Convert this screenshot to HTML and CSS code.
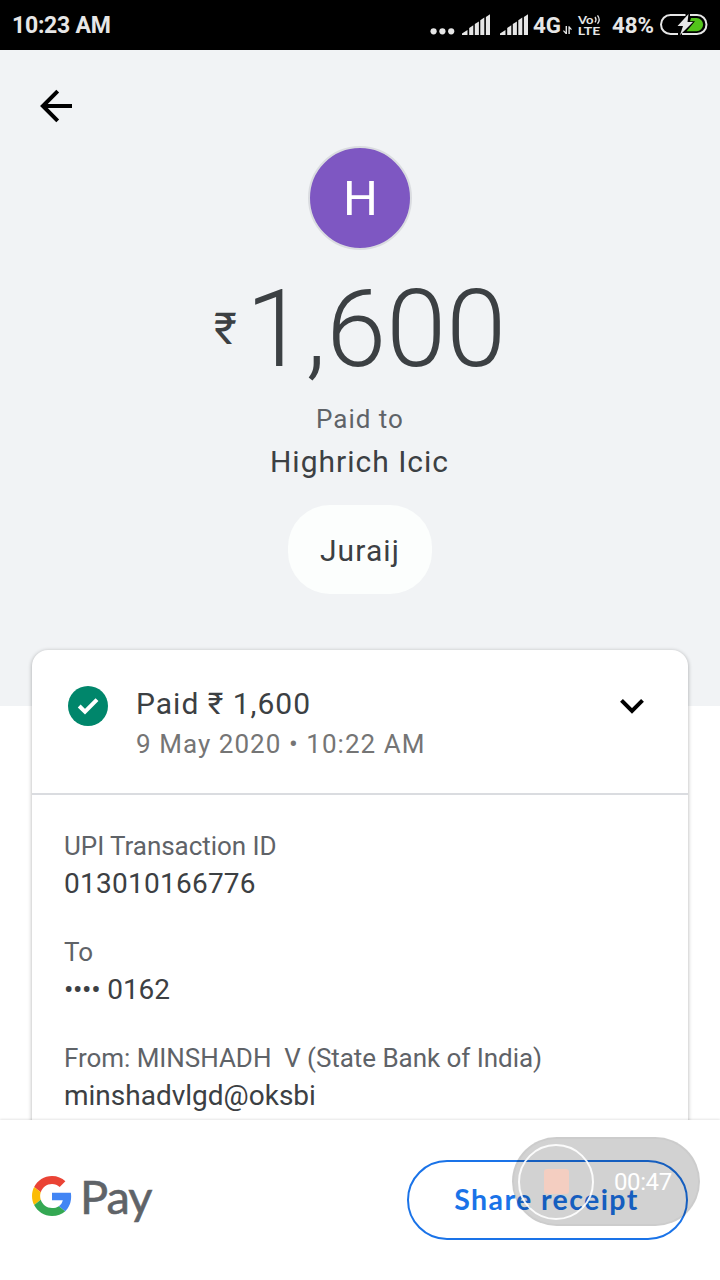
FILE: index.html
```html
<!DOCTYPE html>
<html lang="en">
<head>
<meta charset="utf-8">
<title>Payment receipt</title>
<link rel="stylesheet" href="styles.css">
</head>
<body>
<div class="screen">
  <header class="status">
    <span class="clock">10:23 AM</span>
    <svg class="status-icons" width="300" height="50" viewBox="420 0 300 50">
      <g fill="#e6e6e6">
        <circle cx="433.600" cy="31.300" r="3.100"/><circle cx="442.400" cy="31.300" r="3.100"/><circle cx="451.200" cy="31.300" r="3.100"/>
        <g id="signal">
          <path d="M462 35v-1.500l5.500-3.500v5zM469.200 35v-7l4.100-2.800v9.800zM474.800 35v-11l4.100-2.600v13.600zM480.300 35v-14.700l4-2.800v17.500zM485.900 35v-18l4.100-2.700v20.700z"/>
        </g>
        <use href="#signal" x="38"/>
        <path d="M567 34h-1.300l-2.700-3 .8-.8 1.800 1.800V26H567zM568.400 26.300h1l2.500 2.900-.8.800-1.300-1.300V34h-1.400z"/>
        <text class="net" x="533" y="33.300" textLength="28" lengthAdjust="spacingAndGlyphs">4G</text>
        <text class="volte" x="578" y="23.600" textLength="15.500" lengthAdjust="spacingAndGlyphs">Vo</text>
        <text class="volte" x="577.800" y="35" textLength="22.500" lengthAdjust="spacingAndGlyphs">LTE</text>
        <text class="pct" x="612" y="33.300" textLength="42" lengthAdjust="spacingAndGlyphs">48%</text>
      </g>
      <g fill="none" stroke="#e6e6e6" stroke-width="1.300">
        <path d="M595 17q2 2.700 0 5.400M597.500 15.300q3.400 4.500 0 8.400"/>
      </g>
      <g fill="none" stroke="#e6e6e6" stroke-width="2">
        <path d="M685.500 15H670.500a9.500 9.500 0 0 0 0 19H678M690 15h7a9.500 9.500 0 0 1 0 19H682"/>
      </g>
      <path d="M691 18h5.500a6.600 6.600 0 0 1 0 13.200H686.500l8.500-10h-5z" fill="#52c41a"/>
      <path d="M688.500 14l-11 12h5.500l-3 9 13-13h-5.500z" fill="#e6e6e6"/>
    </svg>
  </header>

  <main class="content">
    <section class="hero">
      <svg class="back" width="34" height="34" viewBox="39 89 34 34" fill="none" stroke="#000" stroke-width="4">
        <path d="M72 106H43M57.700 91.200L42.900 106l14.800 14.800"/>
      </svg>
      <div class="avatar">H</div>
      <div class="amount"><span class="rupee">₹</span><span class="figure">1,600</span></div>
      <div class="paid-to">Paid to</div>
      <div class="payee">Highrich Icic</div>
      <div class="note">Juraij</div>
    </section>

    <section class="card">
      <div class="summary">
        <svg class="tick" width="40" height="40" viewBox="68 686 40 40">
          <circle cx="88" cy="706" r="20" fill="#00866b"/>
          <path d="M79.200 706l5.800 5.700L97 699.700" fill="none" stroke="#fff" stroke-width="4"/>
        </svg>
        <div class="summary-text">
          <div class="paid">Paid ₹ 1,600</div>
          <div class="date">9 May 2020 • 10:22 AM</div>
        </div>
        <svg class="chevron" width="26" height="16" viewBox="619 698 26 16" fill="none" stroke="#000" stroke-width="4">
          <path d="M621.500 700.300L632 710.800l10.500-10.500"/>
        </svg>
      </div>
      <dl class="details">
        <div class="row"><dt>UPI Transaction ID</dt><dd class="txn">013010166776</dd></div>
        <div class="row"><dt>To</dt><dd class="acct"><span class="mask">••••</span> 0162</dd></div>
        <div class="row"><dt>From: MINSHADH&nbsp; V (State Bank of India)</dt><dd>minshadvlgd@oksbi</dd></div>
      </dl>
    </section>
  </main>

  <footer class="footer">
    <div class="brand">
      <svg width="40" height="40" viewBox="0 0 48 48">
        <path fill="#EA4335" d="M24 9.500c3.540 0 6.710 1.220 9.210 3.600l6.850-6.850C35.900 2.380 30.470 0 24 0 14.620 0 6.510 5.380 2.560 13.220l7.980 6.190C12.430 13.720 17.740 9.500 24 9.500z"/>
        <path fill="#4285F4" d="M46.980 24.550c0-1.570-.15-3.090-.38-4.550H24v9.020h12.940c-.58 2.960-2.260 5.480-4.780 7.180l7.730 6c4.510-4.180 7.090-10.360 7.090-17.650z"/>
        <path fill="#FBBC05" d="M10.530 28.590c-.48-1.450-.76-2.990-.76-4.590s.27-3.140.76-4.590l-7.980-6.190C.92 16.460 0 20.120 0 24c0 3.880.92 7.540 2.560 10.780l7.970-6.190z"/>
        <path fill="#34A853" d="M24 48c6.480 0 11.930-2.130 15.890-5.810l-7.730-6c-2.150 1.450-4.920 2.300-8.160 2.300-6.260 0-11.570-4.220-13.470-9.910l-7.980 6.190C6.510 42.620 14.620 48 24 48z"/>
      </svg>
      <span class="pay">Pay</span>
    </div>
    <button class="share">Share receipt</button>
    <div class="recorder">
      <span class="stop"><span class="stop-square"></span></span>
      <span class="elapsed">00:47</span>
    </div>
  </footer>
</div>
</body>
</html>
```
FILE: styles.css
```css
* { box-sizing: border-box; }
body { margin: 0; font-family: Roboto, "Noto Sans", sans-serif; color: #3c4043; background: #fff; }
.screen { width: 720px; height: 1280px; display: flex; flex-direction: column; overflow: hidden; }

.status { height: 50px; flex: none; display: flex; justify-content: space-between; background: #000; color: #e6e6e6; }
.clock { padding-left: 12px; font-size: 23px; font-weight: 700; line-height: 52px; letter-spacing: -.25px; }
.status-icons { display: block; }
.net, .pct { font-family: Roboto, sans-serif; font-size: 22.500px; font-weight: 700; }
.volte { font-family: Lato, sans-serif; font-size: 11.800px; font-weight: 700; }

.content { height: 1070px; flex: none; overflow: hidden; }
.hero { height: 656px; background: #f1f3f5; display: flex; flex-direction: column; align-items: center; padding-top: 39px; }
.back { display: block; align-self: flex-start; margin-left: 39px; flex: none; }
.avatar { width: 104px; height: 104px; margin-top: 23px; flex: none; border: 2px solid #dadce0; border-radius: 50%; background: #7e57c2; color: #fff; font-size: 49px; line-height: 102px; text-align: center; padding-left: 1px; }
.amount { display: flex; align-items: flex-start; height: 120px; margin-top: 19px; }
.rupee { font-size: 44px; line-height: 120px; margin-right: 9px; }
.figure { font-size: 108px; font-weight: 300; line-height: 120px; }
.paid-to { margin-top: 13px; font-size: 26px; line-height: 34px; letter-spacing: 1px; color: #5f6368; }
.payee { margin-top: 6px; padding-right: 1px; font-size: 30px; line-height: 40px; letter-spacing: 1px; }
.note { width: 144px; height: 89px; margin-top: 23px; border-radius: 42px; background: #fcfefd; font-size: 30px; line-height: 91px; letter-spacing: 1.100px; text-align: center; }

.card { width: 656px; height: 560px; margin: -56px auto 0; position: relative; background: #fff; border-radius: 16px 16px 0 0; box-shadow: 0 1px 4px rgba(0,0,0,.32); }
.summary { height: 145px; border-bottom: 2px solid #dadce0; display: flex; align-items: flex-start; padding: 36px 43px 0 36px; }
.summary-text { margin-left: 28px; flex: 1; }
.paid { font-size: 30px; line-height: 36px; letter-spacing: 1px; }
.date { font-size: 26px; line-height: 34px; margin-top: 5px; letter-spacing: 1.050px; color: #757575; }
.chevron { margin-top: 12px; }
.details { margin: 0; padding: 34px 32px; display: flex; flex-direction: column; gap: 32px; }
.row { height: 74px; }
dt { font-size: 26px; line-height: 34px; letter-spacing: -.05px; color: #5f6368; white-space: nowrap; }
dd { margin: 2px 0 0; font-size: 28px; line-height: 38px; }
.txn { letter-spacing: .25px; }
.mask { letter-spacing: -.4px; }

.footer { height: 160px; flex: none; position: relative; display: flex; justify-content: space-between; padding: 40px 32px 0; background: #fff; box-shadow: 0 -1px 2px rgba(0,0,0,.1); }
.brand { display: flex; align-items: flex-start; padding-top: 16px; }
.pay { font-family: Lato, sans-serif; font-size: 47px; line-height: 40px; margin-left: 8px; letter-spacing: -1px; color: #5f6368; -webkit-text-stroke: .6px #5f6368; }
.share { width: 281px; height: 80px; padding: 0 2px 3px 0; border: 2px solid #1a73e8; border-radius: 40px; background: #fff; color: #1a73e8; font-family: Lato, sans-serif; font-size: 28.500px; font-weight: 700; letter-spacing: 1.400px; }
.recorder { position: absolute; left: 512px; top: 17px; width: 188px; height: 89px; border-radius: 45px; background: rgba(0,0,0,.175); border: 2px solid rgba(0,0,0,.03); display: flex; align-items: center; padding-left: 4px; }
.stop { width: 76px; height: 76px; border: 2px solid rgba(255,255,255,.9); border-radius: 50%; display: flex; align-items: center; justify-content: center; }
.stop-square { width: 25px; height: 25px; border-radius: 3px; background: rgba(245,206,192,.95); }
.elapsed { margin-left: 20px; padding-top: 1px; color: #fff; font-size: 24px; letter-spacing: -.4px; }
```
